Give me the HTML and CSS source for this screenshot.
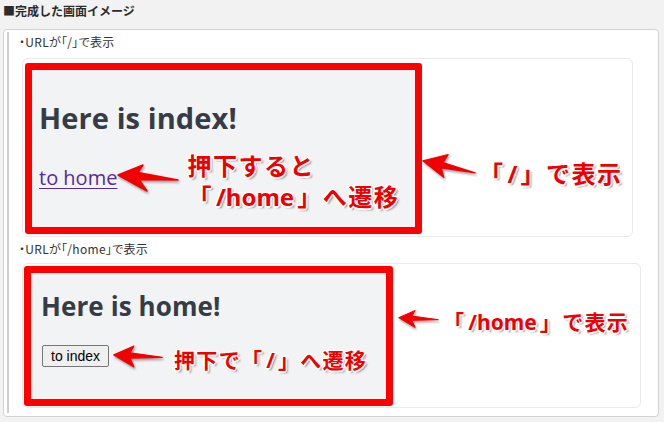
FILE: index.html
```html
<!DOCTYPE html>
<html lang="ja">
<head>
<meta charset="utf-8">
<link rel="stylesheet" href="styles.css">
</head>
<body>
<div class="title">■完成した画面イメージ</div>
<div class="box">
  <div class="quote">
    <div class="caption">・URLが「/」で表示</div>
    <div class="shot shot1">
      <div class="frame frame1">
        <div class="h1">Here is index!</div>
        <div class="row1">
          <a class="link" href="#">to home</a>
          <svg class="arrow a1" viewBox="0 0 62 28"><path d="M1 11 L26 1 L21 8.5 L61 16 L22 15.5 L30 27 Z"/></svg>
          <div class="note big n1"><div class="ln">押下すると</div><div class="ln">「<span class="ltn">/home</span>」へ遷移</div></div>
        </div>
      </div>
      <svg class="arrow a2" viewBox="0 0 62 28"><path d="M1 8 L30 1 L24 10 L61 22 L22 16 L25 27 Z"/></svg>
      <div class="note big n2">「<span class="ltn">/</span>」で表示</div>
    </div>
    <div class="caption">・URLが「/home」で表示</div>
    <div class="shot shot2">
      <div class="frame frame2">
        <div class="h2">Here is home!</div>
        <div class="row2">
          <button class="btn" type="button">to index</button>
          <svg class="arrow a3" viewBox="0 0 62 28"><path d="M1 12 L26 1 L21 9.5 L61 15 L21 16 L26 27 Z"/></svg>
          <div class="note small n3">押下で「<span class="ltn">/</span>」へ遷移</div>
        </div>
      </div>
      <svg class="arrow a4" viewBox="0 0 62 28"><path d="M1 12 L26 1 L21 9.5 L61 15 L21 16 L26 27 Z"/></svg>
      <div class="note small n4">「<span class="ltn">/home</span>」で表示</div>
    </div>
  </div>
</div>
</body>
</html>
```

FILE: styles.css
```css
html, body {
  margin: 0;
  padding: 0;
}
body {
  background: #f2f2f2;
  font-family: "Noto Sans CJK JP", "Noto Sans", sans-serif;
  color: #333;
  width: 664px;
  height: 422px;
  overflow: hidden;
}
.title {
  font-size: 12px;
  font-weight: 700;
  line-height: 17px;
  padding: 2px 0 0 3px;
  height: 17px;
  color: #2b2b2b;
}
.box {
  margin: 10px 5px 0 3px;
  height: 381px;
  border: 1px solid #d2d2d2;
  border-radius: 4px;
  background: #fff;
  padding: 2px 3px 3px 3px;
}
.quote {
  border-left: 2px solid #cfcfcf;
  height: 381px;
  display: flex;
  flex-direction: column;
}
.caption {
  font-size: 12px;
  line-height: 20px;
  height: 20px;
  margin-left: 10px;
  color: #333;
  font-feature-settings: "palt" 1;
  letter-spacing: 0.3px;
}
.shot {
  display: flex;
  align-items: flex-start;
  border: 1px solid #e9e9e9;
  border-radius: 6px;
  background: #fff;
}
.shot1 {
  margin: 6px 22px 2px 13px;
  padding: 4px 2px 2px 2px;
}
.shot2 {
  margin: 4px 14px 0 13px;
  padding: 2px 1px 1px 1px;
}
.frame {
  border: 7px solid #ff0000;
  border-radius: 3px;
  background: #f2f3f5;
  box-sizing: border-box;
  display: flex;
  flex-direction: column;
  flex: none;
}
.frame1 {
  width: 397px;
  height: 171px;
  padding: 30px 7px 0 7px;
}
.frame2 {
  width: 369px;
  height: 140px;
  padding: 17px 10px 0 10px;
}
.h1, .h2 {
  font-family: "Open Sans", "Lato", sans-serif;
  font-weight: 700;
  color: #363c45;
  letter-spacing: 0.1px;
}
.h1 {
  font-size: 29px;
  line-height: 36px;
}
.h2 {
  font-size: 26px;
  line-height: 32px;
}
.row1, .row2 {
  display: flex;
  align-items: flex-start;
}
.row1 {
  margin-top: 13px;
}
.row2 {
  margin-top: 22px;
}
.link {
  font-family: "Open Sans", sans-serif;
  font-size: 20px;
  line-height: 24px;
  color: #5a2a93;
  text-decoration: underline;
  text-decoration-thickness: 1px;
  text-underline-offset: 3px;
  margin-top: 17px;
  white-space: nowrap;
}
.btn {
  font-family: "Liberation Sans", Arial, sans-serif;
  font-size: 14px;
  line-height: 16px;
  padding: 2px 8px;
  background: #efefef;
  border: 1px solid #767676;
  border-radius: 2px;
  color: #000;
  margin: 1px 0 0 1px;
  white-space: nowrap;
  flex: none;
}
.arrow {
  display: block;
  flex: none;
  filter: drop-shadow(1px 2px 1px rgba(0, 0, 0, 0.35));
}
.arrow path {
  fill: #f20000;
  stroke: #f20000;
  stroke-width: 1.5;
  stroke-linejoin: round;
}
.a1 {
  width: 62px;
  height: 28px;
  margin: 15px 8px 0 0;
}
.a2 {
  width: 54px;
  height: 26px;
  margin: 90px 3px 0 0;
}
.a3 {
  width: 50px;
  height: 23px;
  margin: 1px 11px 0 4px;
}
.a4 {
  width: 41px;
  height: 20px;
  margin: 43px 4px 0 5px;
}
.note {
  font-family: "Noto Sans CJK JP", sans-serif;
  font-weight: 700;
  color: #ee0000;
  white-space: nowrap;
  flex: none;
  text-shadow:
    1.5px 0 0 #fff, -1.5px 0 0 #fff, 0 1.5px 0 #fff, 0 -1.5px 0 #fff,
    1px 1px 0 #fff, -1px -1px 0 #fff, 1px -1px 0 #fff, -1px 1px 0 #fff,
    2px 2px 2px rgba(0, 0, 0, 0.45);
}
.big {
  font-size: 24px;
  letter-spacing: 1.5px;
  line-height: 31px;
}
.ln {
  height: 31px;
}
.small {
  font-size: 21px;
  letter-spacing: 1.3px;
  line-height: 28px;
}
.ltn {
  letter-spacing: 0;
  font-family: "Noto Sans", sans-serif;
  font-weight: 700;
  padding: 0 3px;
}
.n1 {
  margin-top: 0;
}
.n2 {
  margin-top: 94px;
}
.n3 {
  margin-top: 1px;
}
.n4 {
  margin-top: 41px;
}
```
